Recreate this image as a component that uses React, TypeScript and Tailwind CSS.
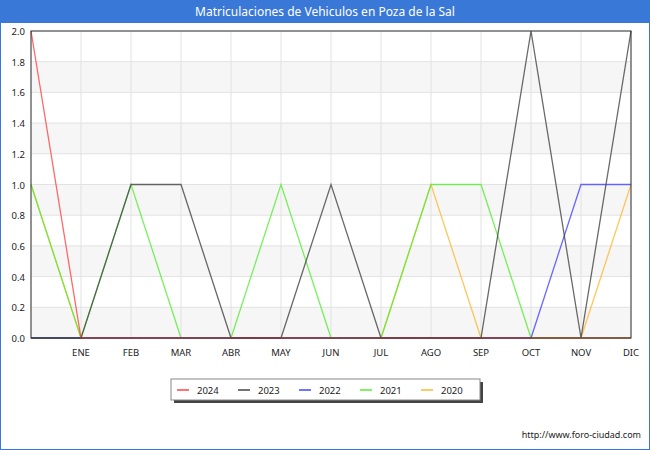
const X0 = 30, X1 = 630, Y0 = 30, Y1 = 337
const months = ['ENE', 'FEB', 'MAR', 'ABR', 'MAY', 'JUN', 'JUL', 'AGO', 'SEP', 'OCT', 'NOV', 'DIC']
const px = (i: number) => X0 + i * 50
const py = (v: number) => Y1 - (v / 2) * (Y1 - Y0)

const series = [
  { name: '2020', color: '#ffb833', data: [1, 0, 0, 0, 0, 0, 0, 0, 1, 0, 0, 0, 1] },
  { name: '2021', color: '#55ee33', data: [1, 0, 1, 0, 0, 1, 0, 0, 1, 1, 0, 0, 0] },
  { name: '2022', color: '#4444ff', data: [0, 0, 0, 0, 0, 0, 0, 0, 0, 0, 0, 1, 1] },
  { name: '2023', color: '#444444', data: [0, 0, 1, 1, 0, 0, 1, 0, 0, 0, 2, 0, 2] },
  { name: '2024', color: '#ff4444', data: [2, 0, 0, 0, 0, 0, 0, 0, 0, 0, 0, 0, 0] },
]

export default function App() {
  const ticks = Array.from({ length: 11 }, (_, i) => i * 0.2)
  return (
    <div className="w-[650px] h-[450px] border border-[#3a78d8] bg-white relative font-['DejaVu_Sans',sans-serif] overflow-hidden">
      <div className="h-[22px] bg-[#3a78d8] text-white text-[12px] flex items-center justify-center">
        Matriculaciones de Vehiculos en Poza de la Sal
      </div>
      <svg width="650" height="420" viewBox="0 22 650 420" className="block">
        {ticks.slice(0, 10).map((t, i) =>
          i % 2 === 1 ? null : (
            <rect key={i} x={X0} y={py(t + 0.2)} width={X1 - X0} height={py(t) - py(t + 0.2)} fill="#f6f6f6" />
          )
        )}
        {ticks.map((t, i) => (
          <line key={i} x1={X0} x2={X1} y1={py(t)} y2={py(t)} stroke="#e2e2e2" />
        ))}
        {Array.from({ length: 13 }, (_, i) => (
          <line key={i} x1={px(i)} x2={px(i)} y1={Y0} y2={Y1} stroke="#e2e2e2" />
        ))}
        {series.map(s => (
          <polyline key={s.name} fill="none" stroke={s.color} strokeWidth="1.3" strokeOpacity="0.8"
            points={s.data.map((v, i) => `${px(i)},${py(v)}`).join(' ')} />
        ))}
        <rect x={X0} y={Y0} width={X1 - X0} height={Y1 - Y0} fill="none" stroke="#333" />
        {ticks.map((t, i) => (
          <text key={i} x="24" y={py(t) + 4} textAnchor="end" fontSize="9.5" fill="#222">{t.toFixed(1)}</text>
        ))}
        {months.map((m, i) => (
          <text key={m} x={px(i + 1)} y="355" textAnchor="middle" fontSize="9.5" fill="#222">{m}</text>
        ))}
        <rect x="173" y="381" width="309" height="21" fill="#444" />
        <rect x="170" y="378" width="309" height="21" fill="white" stroke="#888" />
        {[...series].reverse().map((s, i) => (
          <g key={s.name}>
            <line x1={176 + i * 61} x2={188 + i * 61} y1="389" y2="389" stroke={s.color} strokeWidth="1.5" />
            <text x={196 + i * 61} y="393" fontSize="9.5" fill="#222">{s.name}</text>
          </g>
        ))}
        <text x="640" y="437" textAnchor="end" fontSize="9" fill="#222">http://www.foro-ciudad.com</text>
      </svg>
    </div>
  )
}
